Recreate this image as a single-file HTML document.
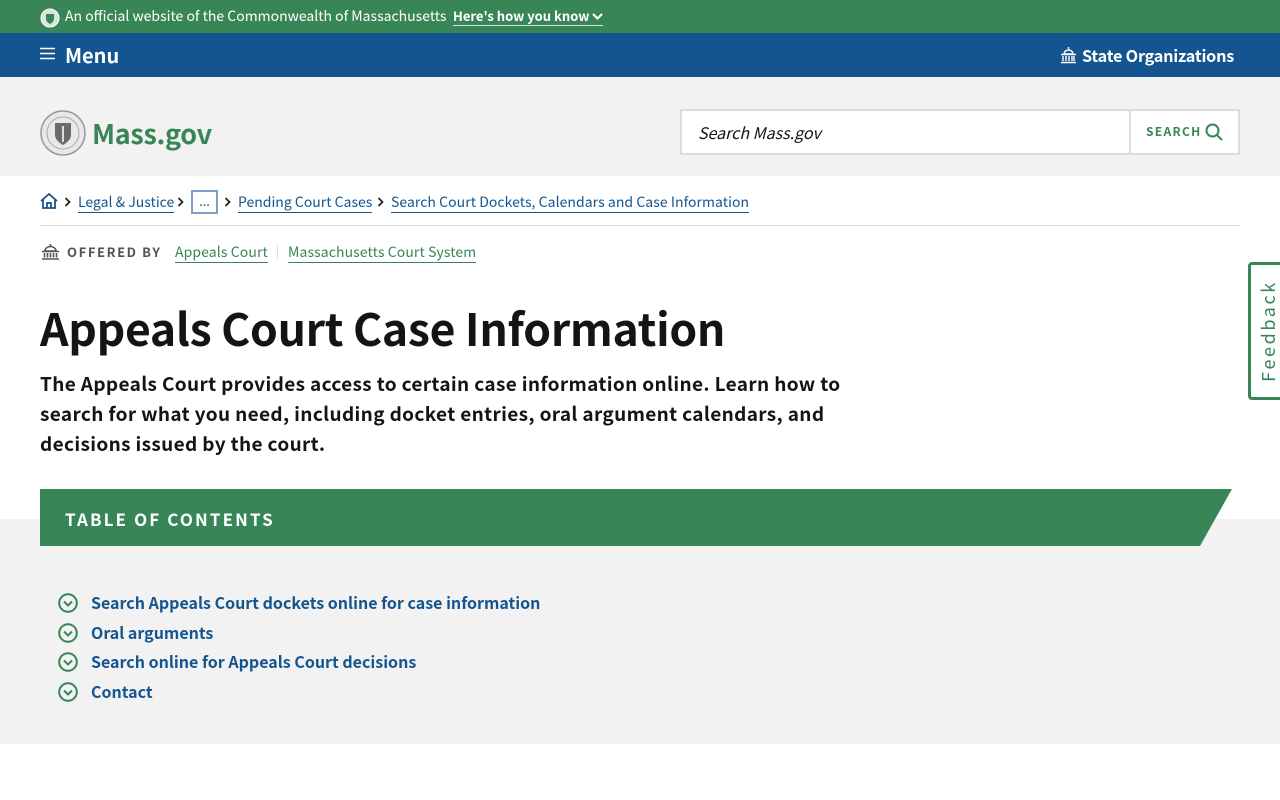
<!DOCTYPE html>
<html><head><meta charset="utf-8"><style>
*{margin:0;padding:0;box-sizing:border-box}
body{width:1280px;height:800px;overflow:hidden;background:#fff;font-family:"Noto Sans CJK JP","Liberation Sans",sans-serif;color:#141414;position:relative}
a{text-decoration:none}
.top{position:absolute;top:0;left:0;width:1280px;height:33px;background:#388557;color:#fff;font-size:14px}
.nav{position:absolute;top:33px;left:0;width:1280px;height:44px;background:#14558f;color:#fff}
.hdr{position:absolute;top:77px;left:0;width:1280px;height:99px;background:#f2f2f2}
.abs{position:absolute;white-space:nowrap}
.ul{border-bottom:1px solid #14558f}
.gl{color:#388557;border-bottom:1px solid #388557}
</style></head><body>
<div class="top">
 <svg class="abs" style="left:40px;top:8px" width="20" height="20" viewBox="0 0 20 20"><circle cx="10" cy="10" r="9" fill="#d8e6dd" stroke="#fff" stroke-width="1"/><path d="M6 6h8v5c0 3-4 5-4 5s-4-2-4-5z" fill="#388557"/></svg>
 <span class="abs" style="left:65px;top:6px;line-height:20px">An official website of the Commonwealth of Massachusetts</span>
 <span class="abs" style="left:453px;top:7px;font-size:13px;font-weight:700;line-height:18px;border-bottom:1px solid #cfe2d6">Here's how you know <svg width="11" height="8" viewBox="0 0 11 8"><path d="M1 1l4.5 4.5L10 1" stroke="#fff" stroke-width="2.2" fill="none"/></svg></span>
</div>
<div class="nav">
 <svg class="abs" style="left:40px;top:14px" width="15" height="13" viewBox="0 0 15 13"><path d="M0 1.5h15M0 6.5h15M0 11.5h15" stroke="#fff" stroke-width="1.5"/></svg>
 <span class="abs" style="left:65px;top:9px;font-size:20px;font-weight:700;line-height:26px">Menu</span>
 <svg class="abs" style="left:1060px;top:13px" width="17" height="18" viewBox="0 0 17 18"><path d="M8.5 1v2M4 8a4.5 4 0 0 1 9 0zM1 8.5h15M3 10v5M6 10v5M9 10v5M12 10v5M14 10v5M1 16.5h15" stroke="#fff" stroke-width="1.4" fill="none"/></svg>
 <span class="abs" style="left:1082px;top:11px;font-size:16.2px;font-weight:600;line-height:22px;letter-spacing:-0.2px">State Organizations</span>
</div>
<div class="hdr">
 <svg class="abs" style="left:40px;top:33px" width="46" height="46" viewBox="0 0 46 46"><circle cx="23" cy="23" r="22" fill="#e8e8e8" stroke="#999" stroke-width="1.5"/><circle cx="23" cy="23" r="16" fill="none" stroke="#aaa"/><path d="M15 13h16v12c0 6-8 10-8 10s-8-4-8-10z" fill="#6a6a6a"/><path d="M23 16v16" stroke="#ddd" stroke-width="2"/></svg>
 <span class="abs" style="left:92px;top:37px;font-size:27px;font-weight:600;color:#388557;line-height:38px;letter-spacing:-0.3px">Mass.gov</span>
 <div class="abs" style="left:680px;top:32px;width:560px;height:46px;background:#fff;border:2px solid #dcdcdc"></div>
 <div class="abs" style="left:1129px;top:32px;width:2px;height:46px;background:#dcdcdc"></div>
 <span class="abs" style="left:698px;top:44px;font-size:16px;font-style:italic;line-height:22px;color:#141414">Search Mass.gov</span>
 <span class="abs" style="left:1146px;top:46px;font-size:12px;font-weight:700;letter-spacing:1.3px;color:#388557;line-height:18px">SEARCH</span>
 <svg class="abs" style="left:1205px;top:46px" width="18" height="18" viewBox="0 0 18 18"><circle cx="7.5" cy="7.5" r="6" stroke="#388557" stroke-width="2" fill="none"/><path d="M12 12l5 5" stroke="#388557" stroke-width="2"/></svg>
</div>
<svg class="abs" style="left:40px;top:193px" width="18" height="16" viewBox="0 0 18 16"><path d="M1 8L9 1l8 7M3 6.5V15h12V6.5M7 15v-5h4v5" stroke="#14558f" stroke-width="1.8" fill="none"/></svg>
<svg class="abs" style="left:64px;top:197px" width="7" height="10" viewBox="0 0 7 10"><path d="M1.5 1l4 4-4 4" stroke="#222" stroke-width="1.8" fill="none"/></svg>
<span class="abs" style="left:78px;top:191px;font-size:14px;line-height:22px;color:#14558f"><span class="ul">Legal &amp; Justice</span></span>
<svg class="abs" style="left:177px;top:197px" width="7" height="10" viewBox="0 0 7 10"><path d="M1.5 1l4 4-4 4" stroke="#222" stroke-width="1.8" fill="none"/></svg>
<div class="abs" style="left:191px;top:190px;width:27px;height:24px;border:2px solid #7da0c4;font-size:13px;color:#14558f;text-align:center;line-height:18px">...</div>
<svg class="abs" style="left:224px;top:197px" width="7" height="10" viewBox="0 0 7 10"><path d="M1.5 1l4 4-4 4" stroke="#222" stroke-width="1.8" fill="none"/></svg>
<span class="abs" style="left:238px;top:191px;font-size:14px;line-height:22px;color:#14558f"><span class="ul">Pending Court Cases</span></span>
<svg class="abs" style="left:377px;top:197px" width="7" height="10" viewBox="0 0 7 10"><path d="M1.5 1l4 4-4 4" stroke="#222" stroke-width="1.8" fill="none"/></svg>
<span class="abs" style="left:391px;top:191px;font-size:14px;line-height:22px;color:#14558f;letter-spacing:0.05px"><span class="ul">Search Court Dockets, Calendars and Case Information</span></span>
<div class="abs" style="left:40px;top:225px;width:1200px;height:1px;background:#dcdcdc"></div>
<svg class="abs" style="left:41px;top:243px" width="19" height="17" viewBox="0 0 19 17"><path d="M9.5 1v2M4 8a5.5 4.5 0 0 1 11 0zM1 8.5h17M3.5 10v4.5M6.5 10v4.5M9.5 10v4.5M12.5 10v4.5M15.5 10v4.5M1 16h17" stroke="#555" stroke-width="1.6" fill="none"/></svg>
<span class="abs" style="left:67px;top:242px;font-size:13px;font-weight:700;letter-spacing:1.6px;color:#535353;line-height:20px">OFFERED BY</span>
<span class="abs" style="left:175px;top:241px;font-size:14px;line-height:22px;letter-spacing:0.1px"><span class="gl">Appeals Court</span></span>
<div class="abs" style="left:277px;top:245px;width:1px;height:14px;background:#ddd"></div>
<span class="abs" style="left:288px;top:241px;font-size:14px;line-height:22px;letter-spacing:0.1px"><span class="gl">Massachusetts Court System</span></span>
<h1 class="abs" style="left:40px;top:298px;font-size:44.5px;font-weight:600;line-height:58px;letter-spacing:-0.3px">Appeals Court Case Information</h1>
<p class="abs" style="left:40px;top:369px;width:860px;white-space:normal;font-size:19px;font-weight:600;line-height:30px;letter-spacing:0.35px">The Appeals Court provides access to certain case information online. Learn how to<br>search for what you need, including docket entries, oral argument calendars, and<br>decisions issued by the court.</p>
<div class="abs" style="left:0;top:519px;width:1280px;height:225px;background:#f2f2f2"></div>
<svg class="abs" style="left:40px;top:489px" width="1192" height="57" viewBox="0 0 1192 57"><path d="M0 0H1192L1160 57H0z" fill="#388557"/></svg>
<span class="abs" style="left:65px;top:507px;font-size:17px;font-weight:700;letter-spacing:2.1px;color:#fff;line-height:24px">TABLE OF CONTENTS</span>
<div class="abs" style="left:58px;top:588px;font-size:16px;font-weight:600;color:#14558f;line-height:29.7px">
 <div><svg width="20" height="20" viewBox="0 0 20 20" style="vertical-align:-4px;margin-right:13px"><circle cx="10" cy="10" r="8.8" stroke="#388557" stroke-width="2" fill="none"/><path d="M6 8.5l4 4 4-4" stroke="#388557" stroke-width="2" fill="none"/></svg>Search Appeals Court dockets online for case information</div>
 <div><svg width="20" height="20" viewBox="0 0 20 20" style="vertical-align:-4px;margin-right:13px"><circle cx="10" cy="10" r="8.8" stroke="#388557" stroke-width="2" fill="none"/><path d="M6 8.5l4 4 4-4" stroke="#388557" stroke-width="2" fill="none"/></svg>Oral arguments</div>
 <div><svg width="20" height="20" viewBox="0 0 20 20" style="vertical-align:-4px;margin-right:13px"><circle cx="10" cy="10" r="8.8" stroke="#388557" stroke-width="2" fill="none"/><path d="M6 8.5l4 4 4-4" stroke="#388557" stroke-width="2" fill="none"/></svg>Search online for Appeals Court decisions</div>
 <div><svg width="20" height="20" viewBox="0 0 20 20" style="vertical-align:-4px;margin-right:13px"><circle cx="10" cy="10" r="8.8" stroke="#388557" stroke-width="2" fill="none"/><path d="M6 8.5l4 4 4-4" stroke="#388557" stroke-width="2" fill="none"/></svg>Contact</div>
</div>
<div class="abs" style="left:1248px;top:262px;width:40px;height:138px;background:#fff;border:3px solid #388557;border-radius:4px"></div>
<span class="abs" style="left:1268px;top:331px;transform:translate(-50%,-50%) rotate(-90deg);font-size:18px;color:#388557;letter-spacing:2.6px;line-height:20px">Feedback</span>
</body></html>
